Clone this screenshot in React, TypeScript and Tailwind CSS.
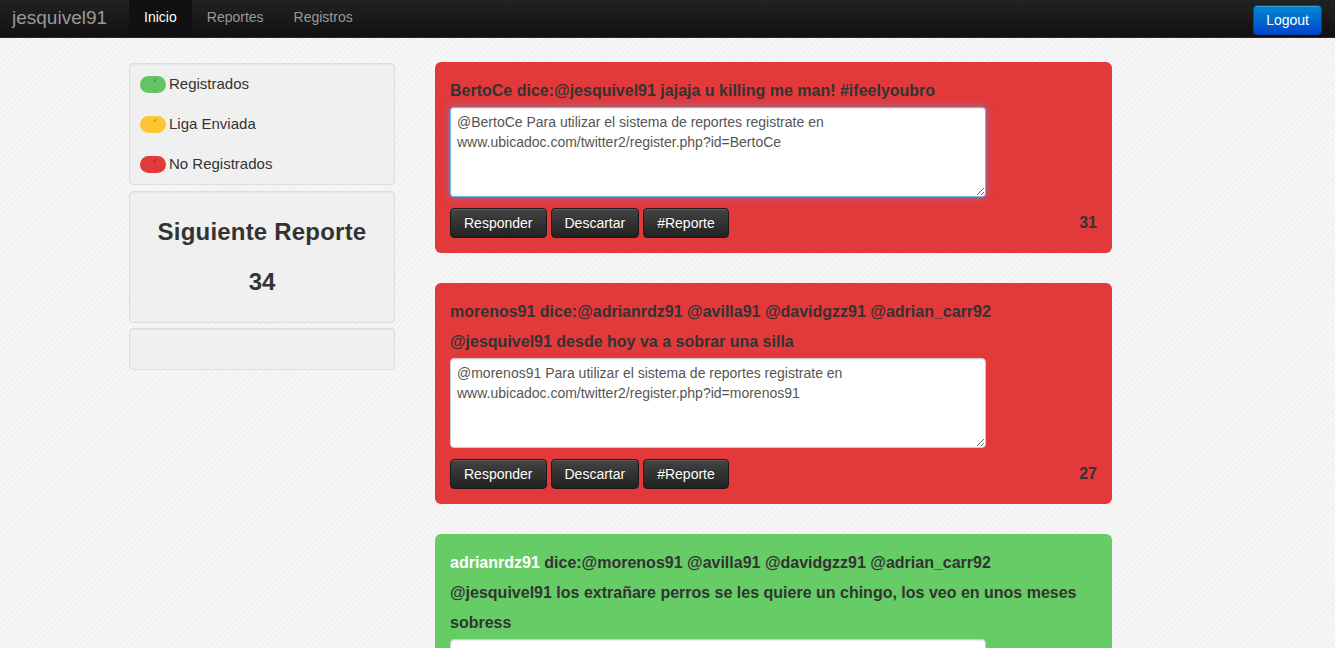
import { useState } from "react";

type Tweet = {
    id: number;
    user: string;
    lines: string[];
    reply: string;
    count: number;
    status: "red" | "green";
    focused?: boolean;
};

const tweets: Tweet[] = [
    {
        id: 1,
        user: "BertoCe",
        lines: ["dice:@jesquivel91 jajaja u killing me man! #ifeelyoubro"],
        reply: "@BertoCe Para utilizar el sistema de reportes registrate en www.ubicadoc.com/twitter2/register.php?id=BertoCe",
        count: 31,
        status: "red",
        focused: true,
    },
    {
        id: 2,
        user: "morenos91",
        lines: ["dice:@adrianrdz91 @avilla91 @davidgzz91 @adrian_carr92", "@jesquivel91 desde hoy va a sobrar una silla"],
        reply: "@morenos91 Para utilizar el sistema de reportes registrate en www.ubicadoc.com/twitter2/register.php?id=morenos91",
        count: 27,
        status: "red",
    },
    {
        id: 3,
        user: "adrianrdz91",
        lines: ["dice:@morenos91 @avilla91 @davidgzz91 @adrian_carr92", "@jesquivel91 los extrañare perros se les quiere un chingo, los veo en unos meses", "sobress"],
        reply: "",
        count: 25,
        status: "green",
    },
];

const legend = [
    { label: "Registrados", color: "bg-[#62c462]" },
    { label: "Liga Enviada", color: "bg-[#fbc631]" },
    { label: "No Registrados", color: "bg-[#e23a3a]" },
];

const Pill = ({ color }: { color: string }) => (
    <span className={`relative inline-block w-[26px] h-[17px] rounded-full ${color}`}>
        <span className="absolute left-[13px] top-[4px] w-[4px] h-[1px] bg-black/30 -rotate-45" />
    </span>
);

const darkBtn =
    "px-[13px] py-1 text-[14px] leading-5 text-white rounded-[4px] border border-[#1a1a1a] bg-linear-to-b from-[#444444] to-[#222222] shadow-[inset_0_1px_0_rgba(255,255,255,0.15)] [text-shadow:0_-1px_0_rgba(0,0,0,0.25)]";

const TweetCard = ({ tweet }: { tweet: Tweet }) => {
    const [text, setText] = useState(tweet.reply);
    const isGreen = tweet.status === "green";

    return (
        <div className={`rounded-[6px] px-[15px] pt-[14px] pb-[15px] ${isGreen ? "bg-[#66cc66]" : "bg-[#e3393a]"}`}>
            <div className="text-[16px] leading-[30px] font-bold text-[#333333]">
                {tweet.lines.map((line, i) => (
                    <div key={i}>
                        {i === 0 && <span className={isGreen ? "text-white" : ""}>{tweet.user} </span>}
                        {line}
                    </div>
                ))}
            </div>
            <textarea
                value={text}
                onChange={(e) => setText(e.target.value)}
                className={`block mt-px w-[536px] h-[90px] px-[6px] py-[4px] text-[14px] leading-5 text-[#555555] bg-white rounded-[4px] border outline-none ${
                    tweet.focused
                        ? "border-[rgba(82,168,236,0.8)] shadow-[inset_0_1px_1px_rgba(0,0,0,0.075),0_0_8px_rgba(82,168,236,0.6)]"
                        : "border-[#cccccc] shadow-[inset_0_1px_1px_rgba(0,0,0,0.075)]"
                }`}
            />
            <div className="flex items-center justify-between mt-[11px]">
                <div className="flex gap-[4px]">
                    <button className={darkBtn}>Responder</button>
                    <button className={darkBtn}>Descartar</button>
                    <button className={darkBtn}>#Reporte</button>
                </div>
                <span className="text-[16px] font-bold text-[#333333]">{tweet.count}</span>
            </div>
        </div>
    );
};

const App = () => {
    return (
        <div
            className="min-h-screen font-['Liberation_Sans',Arial,sans-serif] text-[#333333] bg-[#f3f3f3] bg-[repeating-linear-gradient(135deg,#f1f1f1_0px,#f1f1f1_2px,#f7f7f7_2px,#f7f7f7_4px)]"
        >
            <div className="flex items-center h-[38px] bg-linear-to-b from-[#222222] to-[#111111] border-b border-[#252525]">
                <span className="pl-3 pr-[22px] pb-px text-[19px] text-[#999999]">jesquivel91</span>
                <nav className="flex h-full text-[14px]">
                    <a className="flex items-center pb-[2px] px-[15px] bg-[#111111] text-white">Inicio</a>
                    <a className="flex items-center pb-[2px] px-[15px] text-[#999999]">Reportes</a>
                    <a className="flex items-center pb-[2px] px-[15px] text-[#999999]">Registros</a>
                </nav>
                <button className="ml-auto mr-[13px] mt-[3px] px-3 py-1 text-[14px] leading-5 text-white rounded-[4px] border border-[#0044aa] bg-linear-to-b from-[#0088cc] to-[#0044cc] shadow-[inset_0_1px_0_rgba(255,255,255,0.2)]">
                    Logout
                </button>
            </div>

            <div className="flex gap-[40px] pl-[129px] pt-[24px]">
                <aside className="w-[266px] flex flex-col">
                    <div className="mt-px bg-[#f0f0f0] border border-[#dddddd] rounded-[4px] shadow-[inset_0_1px_1px_rgba(0,0,0,0.05)]">
                        {legend.map((item) => (
                            <div key={item.label} className="flex items-center gap-[3px] h-10 pl-[10px] text-[15px] text-[#333333]">
                                <Pill color={item.color} />
                                <span>{item.label}</span>
                            </div>
                        ))}
                    </div>
                    <div className="mt-[6px] bg-[#f0f0f0] border border-[#dddddd] rounded-[4px] pt-5 pb-5 text-center shadow-[inset_0_1px_1px_rgba(0,0,0,0.05)]">
                        <h2 className="text-[24px] leading-10 font-bold tracking-[0.2px]">Siguiente Reporte</h2>
                        <h2 className="mt-[10px] text-[24px] leading-10 font-bold">34</h2>
                    </div>
                    <div className="mt-[5px] h-[42px] bg-[#f0f0f0] border border-[#dddddd] rounded-[4px] shadow-[inset_0_1px_1px_rgba(0,0,0,0.05)]" />
                </aside>

                <main className="w-[677px] flex flex-col gap-[30px] pb-10">
                    {tweets.map((t) => (
                        <TweetCard key={t.id} tweet={t} />
                    ))}
                </main>
            </div>
        </div>
    );
};

export default App;
